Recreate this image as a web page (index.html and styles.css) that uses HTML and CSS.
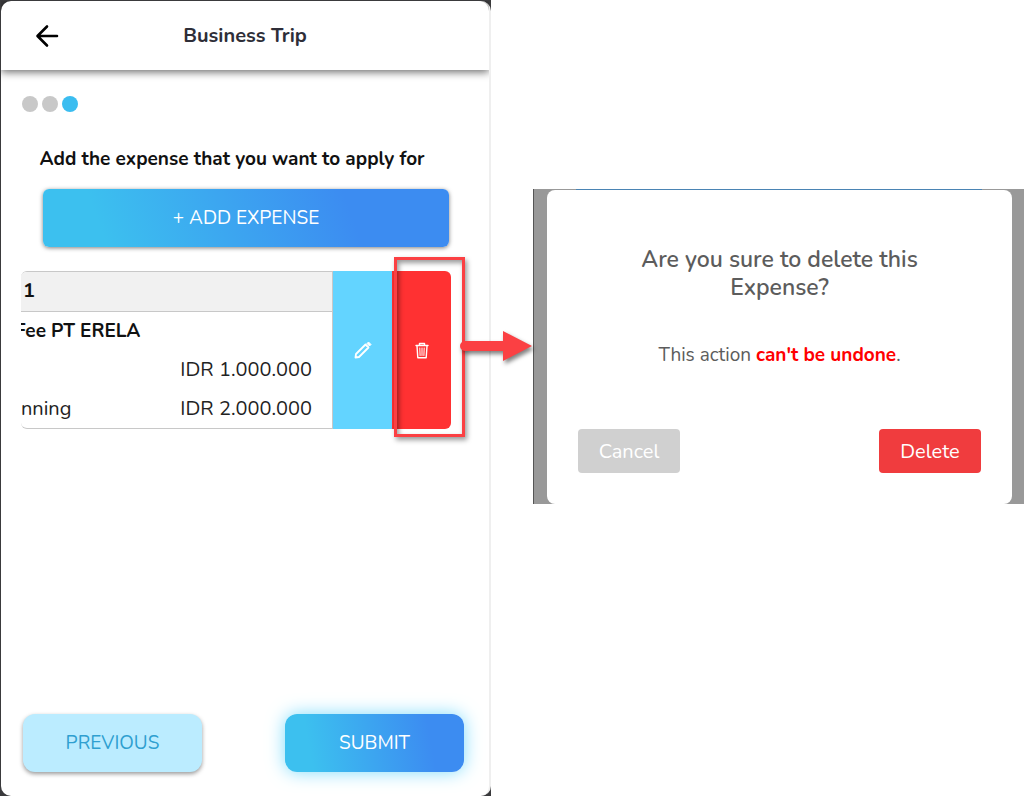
FILE: index.html
```
<!DOCTYPE html>
<html lang="en">
<head>
  <meta charset="UTF-8">
  <meta name="viewport" content="width=device-width, initial-scale=1.0">
  <title>Business Trip</title>
  <link rel="stylesheet" href="styles.css">
</head>
<body>
  <div class="board">
    <div class="phone">
      <div class="screen">
        <header class="topbar">
          <button type="button" class="back" aria-label="Back">
            <svg width="24" height="24" viewBox="0 0 24 24" fill="none" stroke="#000" stroke-width="2.600" stroke-linecap="round" stroke-linejoin="round">
              <path d="M22 12H3M12 2.500L2.500 12l9.500 9.500"/>
            </svg>
          </button>
          <h1>Business Trip</h1>
        </header>

        <main class="content">
          <div class="steps">
            <span class="step"></span>
            <span class="step"></span>
            <span class="step active"></span>
          </div>
          <h2>Add the expense that you want to apply for</h2>
          <button type="button" class="btn-add">+ ADD EXPENSE</button>

          <div class="expense">
            <div class="expense-card">
              <div class="expense-head">1</div>
              <div class="expense-title">Fee PT ERELA</div>
              <div class="expense-row"><span></span><span>IDR 1.000.000</span></div>
              <div class="expense-row"><span>nning</span><span>IDR 2.000.000</span></div>
            </div>
            <button type="button" class="action edit" aria-label="Edit">
              <svg width="18" height="18" viewBox="0 0 18 18" fill="none" stroke="#fff" stroke-width="1.800" stroke-linejoin="round">
                <path d="M1.500 16.500l.500-3.500L11.500 3.500l3 3L5 16z"/>
                <path d="M13 2.500L14.500 1 17 3.500 15.500 5z" fill="#fff" stroke-width="1"/>
              </svg>
            </button>
            <div class="delete-wrap">
              <button type="button" class="action delete" aria-label="Delete expense">
                <svg width="14" height="17" viewBox="0 0 14 17" fill="none" stroke="#fff" stroke-width="1.400" stroke-linecap="round" stroke-linejoin="round">
                  <path d="M1 3.500h12M4.500 3.500V1.500h5v2M2 4l.800 11.700h8.400L12 4"/>
                  <path d="M4.800 6l.300 7.500M7 6v7.500M9.200 6l-.300 7.500" stroke-width="1"/>
                </svg>
              </button>
              <div class="highlight"></div>
              <svg class="pointer" width="72" height="30" viewBox="0 0 72 30" fill="#fb4043">
                <path d="M5 10h38V0l29 15-29 15V20H5a5 5 0 0 1 0-10z"/>
              </svg>
            </div>
          </div>
        </main>

        <footer class="footer">
          <button type="button" class="btn-prev">PREVIOUS</button>
          <button type="button" class="btn-submit">SUBMIT</button>
        </footer>
      </div>
    </div>

    <div class="backdrop">
      <div class="dialog" role="dialog" aria-labelledby="dialogTitle">
        <h2 id="dialogTitle">Are you sure to delete this Expense?</h2>
        <p>This action <strong>can't be undone</strong>.</p>
        <div class="dialog-buttons">
          <button type="button" class="btn-cancel">Cancel</button>
          <button type="button" class="btn-delete">Delete</button>
        </div>
      </div>
    </div>
  </div>
</body>
</html>
```
FILE: styles.css
```
* {
  box-sizing: border-box;
}
body {
  font-family: Nunito, Lato, sans-serif;
  margin: 0;
  background-color: #fff;
  color: #222;
}
h1,
h2,
p {
  margin: 0;
}
button {
  font-family: inherit;
  border: none;
  padding: 0;
  cursor: pointer;
}
svg {
  display: block;
}
.board {
  display: grid;
  grid-template-columns: 491fr 42fr 491fr;
  align-items: start;
}
.phone {
  min-height: 100vh;
  display: flex;
  padding: 1px 0 0 1px;
  background-color: #3a3a3c;
}
.screen {
  flex: 1;
  display: flex;
  flex-direction: column;
  background-color: #fff;
  border-right: 2px solid #efefef;
  border-radius: 10px;
}
.topbar {
  height: 69px;
  display: grid;
  grid-template-columns: 34px 1fr 34px;
  align-items: center;
  padding: 0 34px;
  border-radius: 10px 10px 0 0;
  box-shadow: 0 2px 8px rgba(0, 0, 0, 0.6);
  clip-path: inset(0 0 -14px 0);
}
.topbar h1 {
  font-size: 20px;
  font-weight: bold;
  text-align: center;
  color: #2e2e38;
}
.back {
  background: none;
}
.content {
  flex: 1;
  padding: 26px 38px 0 20px;
}
.steps {
  display: flex;
  gap: 4px;
  padding-left: 1px;
}
.step {
  width: 16px;
  height: 16px;
  border-radius: 50%;
  background-color: #c8c8c8;
}
.step.active {
  background-color: #3bbdf0;
}
.content h2 {
  margin: 34px 0 17px;
  padding-right: 8px;
  font-size: 19px;
  font-weight: bold;
  line-height: 26px;
  text-align: center;
  color: #111;
}
.btn-add {
  display: block;
  width: calc(100% - 24px);
  height: 58px;
  margin-left: 22px;
  border-radius: 6px;
  background: linear-gradient(70deg, #3cc0ef 15%, #3c8cf1 75%);
  box-shadow: 0 1px 4px rgba(0, 0, 0, 0.5);
  color: #fff;
  font-size: 19px;
}
.expense {
  display: flex;
  margin-top: 24px;
}
.expense-card {
  flex: 1;
  overflow: hidden;
  border: 1px solid #c8c8c8;
  border-left: none;
  border-radius: 6px 0 0 6px;
  font-size: 20px;
}
.expense-head {
  height: 40px;
  padding-left: 2px;
  line-height: 38px;
  border-bottom: 1px solid #c8c8c8;
  background-color: #f1f1f1;
  color: #111;
  font-weight: bold;
}
.expense-title {
  height: 38px;
  margin-left: -6px;
  line-height: 38px;
  color: #111;
  font-size: 19px;
  font-weight: bold;
}
.expense-row {
  display: flex;
  justify-content: space-between;
  padding-right: 20px;
  line-height: 39px;
}
.action {
  display: flex;
  align-items: center;
  justify-content: center;
  width: 59px;
}
.edit {
  background-color: #63d4ff;
}
.delete-wrap {
  position: relative;
  display: flex;
}
.delete {
  border-radius: 0 6px 6px 0;
  background-color: #ff3132;
}
/* callout drawn over the swipe action */
.highlight {
  position: absolute;
  inset: -14px -14px -8px 2px;
  border: 3px solid #fb4043;
  box-shadow: 2px 3px 5px rgba(0, 0, 0, 0.4), inset 2px 3px 5px rgba(0, 0, 0, 0.4);
  pointer-events: none;
}
.pointer {
  position: absolute;
  left: 68px;
  top: 60px;
  overflow: visible;
  filter: drop-shadow(2px 3px 2px rgba(0, 0, 0, 0.5));
}
.footer {
  display: flex;
  justify-content: space-between;
  padding: 0 25px 24px 22px;
}
.footer button {
  width: 179px;
  height: 58px;
  border-radius: 12px;
  font-size: 19px;
}
.footer .btn-prev {
  background-color: #bbecff;
  box-shadow: 0 2px 4px rgba(0, 0, 0, 0.4);
  color: #2f9fd0;
}
.footer .btn-submit {
  background: linear-gradient(80deg, #3cc0ef 15%, #3c8cf1 80%);
  box-shadow: 0 0 18px #7fdcfb;
  color: #fff;
}
.backdrop {
  grid-column: 3;
  margin-top: 189px;
  padding: 1px 12px 0 13px;
  border-left: 1px solid #555;
  background: linear-gradient(#4a84b4, #4a84b4) 42px 0 / calc(100% - 84px) 1px no-repeat #999;
}
.dialog {
  padding: 56px 31px 31px;
  border-radius: 8px;
  background-color: #fff;
  text-align: center;
  color: #5c5c5c;
}
.dialog h2 {
  max-width: 300px;
  margin: 0 auto;
  font-size: 23px;
  font-weight: 600;
  line-height: 28px;
}
.dialog p {
  margin: 39px 0 60px;
  font-size: 19px;
  line-height: 28px;
}
.dialog strong {
  color: #f00;
  font-weight: bold;
}
.dialog-buttons {
  display: flex;
  justify-content: space-between;
}
.dialog-buttons button {
  width: 102px;
  height: 44px;
  border-radius: 4px;
  color: #fff;
  font-size: 20px;
}
.dialog-buttons .btn-cancel {
  background-color: #d0d0d0;
}
.dialog-buttons .btn-delete {
  background-color: #f03c3e;
}
```
